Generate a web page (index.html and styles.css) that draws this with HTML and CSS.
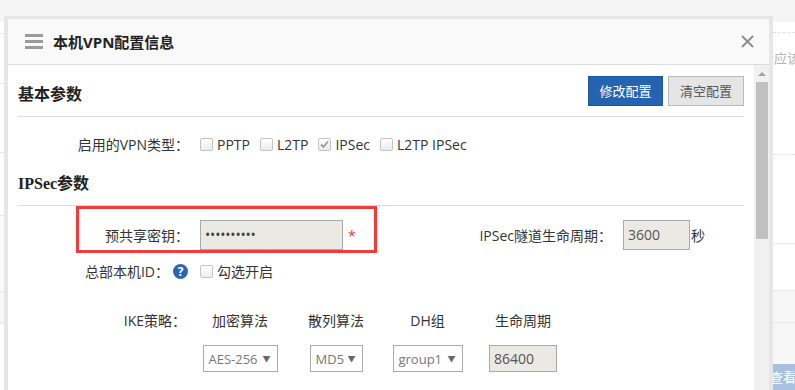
FILE: index.html
```html
<!DOCTYPE html>
<html lang="zh-CN">
<head>
    <meta charset="UTF-8">
    <title>本机VPN配置信息</title>
    <link rel="stylesheet" href="styles.css">
</head>
<body>
<div class="page">
    <div class="bg-left">
        <div class="bl-row bl-a"></div>
        <div class="bl-row bl-b"></div>
        <div class="bl-row bl-c"></div>
        <div class="bl-row bl-d"></div>
        <div class="bl-row bl-e"></div>
        <div class="bl-row bl-f"></div>
    </div>
    <div class="bg-right">
        <div class="br-top">
            <div class="br-dash"></div>
            <div class="br-text">对应该</div>
            <div class="br-dash br-dash2"></div>
        </div>
        <div class="br-mid"></div>
        <div class="br-gray"></div>
        <div class="br-gray br-gray2"></div>
        <div class="br-btn">查看</div>
    </div>

    <div class="modal">
        <div class="modal-head">
            <span class="menu-icon"><i></i><i></i><i></i></span>
            <span class="modal-title">本机VPN配置信息</span>
            <svg class="close" width="13" height="13" viewBox="0 0 13 13">
                <path d="M1 1 L12 12 M12 1 L1 12" stroke="#8a8a8a" stroke-width="1.8" fill="none"/>
            </svg>
        </div>
        <div class="modal-body">
            <div class="content">
                <div class="sec-head sec-first">
                    <h3>基本参数</h3>
                    <div class="btns">
                        <span class="btn btn-primary">修改配置</span>
                        <span class="btn btn-default">清空配置</span>
                    </div>
                </div>

                <div class="form-row vpn-row">
                    <span class="lbl">启用的VPN类型：</span>
                    <span class="chk-item"><span class="chk"></span>PPTP</span>
                    <span class="chk-item"><span class="chk"></span>L2TP</span>
                    <span class="chk-item"><span class="chk checked">
                        <svg width="9" height="9" viewBox="0 0 9 9"><path d="M1 4.5 L3.5 7 L8 1.5" stroke="#9a9a9a" stroke-width="1.8" fill="none"/></svg>
                    </span>IPSec</span>
                    <span class="chk-item"><span class="chk"></span>L2TP IPSec</span>
                </div>

                <div class="sec-head">
                    <h3>IPSec参数</h3>
                </div>

                <div class="form-row key-row">
                    <span class="lbl">预共享密钥：</span>
                    <span class="inp inp-key">••••••••••</span>
                    <span class="star">*</span>
                    <span class="lbl lbl2">IPSec隧道生命周期：</span>
                    <span class="inp inp-life">3600</span>
                    <span class="unit">秒</span>
                </div>

                <div class="form-row id-row">
                    <span class="lbl">总部本机ID：<span class="help">?</span></span>
                    <span class="chk-item"><span class="chk"></span>勾选开启</span>
                </div>

                <div class="ike">
                    <div class="ike-row ike-head">
                        <span class="ike-lbl">IKE策略：</span>
                        <span class="col c1">加密算法</span>
                        <span class="col c2">散列算法</span>
                        <span class="col c3">DH组</span>
                        <span class="col c4">生命周期</span>
                    </div>
                    <div class="ike-row ike-vals">
                        <span class="ike-lbl"></span>
                        <span class="col c1"><span class="sel sel-aes">AES-256<i>▼</i></span></span>
                        <span class="col c2"><span class="sel sel-md5">MD5<i>▼</i></span></span>
                        <span class="col c3"><span class="sel sel-dh">group1<i>▼</i></span></span>
                        <span class="col c4"><span class="inp inp-ike">86400</span></span>
                    </div>
                </div>

                <div class="highlight"></div>
            </div>
            <div class="scrollbar">
                <div class="sb-arrow"></div>
                <div class="sb-thumb"></div>
            </div>
        </div>
    </div>
</div>
</body>
</html>
```

FILE: styles.css
```css
*{
    margin: 0;
    padding: 0;
    box-sizing: border-box;
}
body{
    background: #f5f5f5;
    font-family: "Open Sans", "Noto Sans CJK SC", sans-serif;
    font-size: 14px;
    color: #333;
}
.page{
    position: relative;
    width: 795px;
    height: 390px;
    overflow: hidden;
    display: flex;
    justify-content: space-between;
}

/* page behind the dialog */
.bg-left{
    width: 12px;
    margin-top: 22px;
    background: #fff;
}
.bl-row{
    border-bottom: 1px solid #e6e6e6;
}
.bl-a{ height: 12px; }
.bl-b{ height: 50px; }
.bl-c{ height: 69px; }
.bl-d{ height: 63px; }
.bl-e{ height: 76px; background: #fafafa; }
.bl-f{ height: 32px; background: #f7f7f7; }

.bg-right{
    width: 28px;
    margin-top: 22px;
    display: flex;
    flex-direction: column;
}
.br-top{
    background: #fff;
    height: 222px;
    padding-top: 10px;
    border-bottom: 1px solid #e8e8e8;
}
.br-dash{
    border-top: 1px dashed #e2e2e2;
    margin-left: 6px;
}
.br-text{
    margin-top: 15px;
    color: #b5b5b5;
    font-size: 13px;
    white-space: nowrap;
    margin-left: -6px;
}
.br-dash2{
    margin-top: 87px;
}
.br-mid{
    height: 46px;
    background: #fff;
}
.br-gray{
    height: 32px;
    background: #f7f7f7;
    border-top: 1px solid #e8e8e8;
}
.br-gray2{
    height: 42px;
}
.br-btn{
    height: 26px;
    background: #a9c1e1;
    color: #fff;
    font-size: 13px;
    line-height: 26px;
    white-space: nowrap;
    padding-left: 3px;
}

/* dialog */
.modal{
    position: absolute;
    left: 4px;
    top: 16px;
    width: 769px;
    height: 380px;
    border: 4px solid #e6e6e6;
    border-top-width: 3px;
    background: #fff;
    display: flex;
    flex-direction: column;
}
.modal-head{
    height: 46px;
    background: #f9f9f9;
    border-bottom: 1px solid #dcdcdc;
    display: flex;
    align-items: center;
    padding: 0 15px 0 17px;
}
.menu-icon{
    width: 18px;
    display: flex;
    flex-direction: column;
    gap: 3px;
}
.menu-icon i{
    display: block;
    height: 3px;
    background: #9a9a9a;
}
.modal-title{
    margin-left: 10px;
    font-size: 15px;
    font-weight: bold;
    color: #222;
}
.close{
    margin-left: auto;
}
.modal-body{
    flex: 1;
    display: flex;
}
.content{
    position: relative;
    flex: 1;
    padding: 10px 10px 0;
}
.scrollbar{
    width: 15px;
    background: #f1f1f1;
    padding: 0 1px 0 2px;
}
.sb-arrow{
    width: 0;
    height: 0;
    margin: 7px auto 0;
    border-left: 4px solid transparent;
    border-right: 4px solid transparent;
    border-bottom: 4px solid #a3a3a3;
}
.sb-thumb{
    margin-top: 6px;
    height: 157px;
    background: #c1c1c1;
}

/* sections */
.sec-head{
    display: flex;
    align-items: flex-end;
    justify-content: space-between;
    border-bottom: 1px solid #dcdcdc;
    padding-bottom: 10px;
    margin-top: 14px;
}
.sec-first{
    margin-top: 0;
    align-items: center;
}
.sec-head h3{
    font-family: "Liberation Serif", "Noto Sans CJK SC", serif;
    font-size: 16px;
    line-height: 22px;
    font-weight: bold;
    color: #222;
}
.sec-first h3{
    padding-top: 9px;
}
.btns{
    display: flex;
    gap: 5px;
}
.btn{
    height: 30px;
    line-height: 28px;
    text-align: center;
    font-size: 13px;
    cursor: pointer;
}
.btn-primary{
    width: 75px;
    background: #2563b0;
    border: 1px solid #1d58a3;
    color: #fff;
}
.btn-default{
    width: 76px;
    background: #e5e5e5;
    border: 1px solid #bababa;
    color: #555;
}

/* form rows */
.form-row{
    display: flex;
    align-items: center;
    height: 30px;
}
.vpn-row{ margin-top: 12px; }
.key-row{ margin-top: 14px; }
.id-row{ margin-top: 6px; }
.lbl{
    width: 171px;
    margin-right: 11px;
    flex-shrink: 0;
    text-align: right;
    white-space: nowrap;
    display: flex;
    align-items: center;
    justify-content: flex-end;
}
.lbl2{
    width: 156px;
    margin-left: 101px;
}
.chk-item{
    display: flex;
    align-items: center;
    margin-right: 10px;
    white-space: nowrap;
}
.chk{
    width: 13px;
    height: 13px;
    border: 1px solid #c3c3c3;
    border-radius: 2px;
    background: linear-gradient(#fff, #ececec);
    margin-right: 4px;
    display: flex;
    align-items: center;
    justify-content: center;
}
.help{
    width: 15px;
    height: 15px;
    border-radius: 50%;
    background: #2a66b3;
    color: #fff;
    font-weight: bold;
    font-size: 12px;
    line-height: 15px;
    text-align: center;
    margin-left: 4px;
    margin-right: 1px;
}
.inp{
    height: 30px;
    border: 1px solid #a9a9a9;
    background: #ebe9e3;
    padding: 0 4px;
    line-height: 28px;
    color: #555;
}
.inp-key{
    width: 143px;
    color: #444;
    letter-spacing: -0.2px;
}
.inp-life{
    width: 67px;
}
.star{
    color: #f33;
    margin-left: 5px;
    width: 7px;
}
.unit{
    margin-left: 1px;
}

/* ike table */
.ike-row{
    display: flex;
    align-items: center;
}
.ike-head{
    margin-top: 24px;
    height: 20px;
}
.ike-vals{
    margin-top: 15px;
    height: 27px;
}
.ike-lbl{
    width: 168px;
    text-align: right;
}
.col{
    text-align: center;
    display: flex;
    justify-content: center;
}
.c1{ width: 108px; }
.c2{ width: 84px; }
.c3{ width: 99px; }
.c4{ width: 92px; }
.sel{
    height: 27px;
    border: 1px solid #aaa;
    background: #fff;
    color: #777;
    font-size: 13px;
    display: flex;
    align-items: center;
    justify-content: space-between;
    padding: 0 6px 0 5px;
    white-space: nowrap;
}
.sel i{
    font-style: normal;
    font-size: 8px;
    color: #666;
}
.sel-aes{ width: 75px; }
.sel-md5{ width: 53px; }
.sel-dh{ width: 70px; }
.inp-ike{
    width: 68px;
    height: 27px;
    line-height: 25px;
    text-align: left;
}

/* red annotation box */
.highlight{
    position: absolute;
    left: 68px;
    top: 141px;
    width: 301px;
    height: 47px;
    border: 3px solid #f23b3b;
}
```
